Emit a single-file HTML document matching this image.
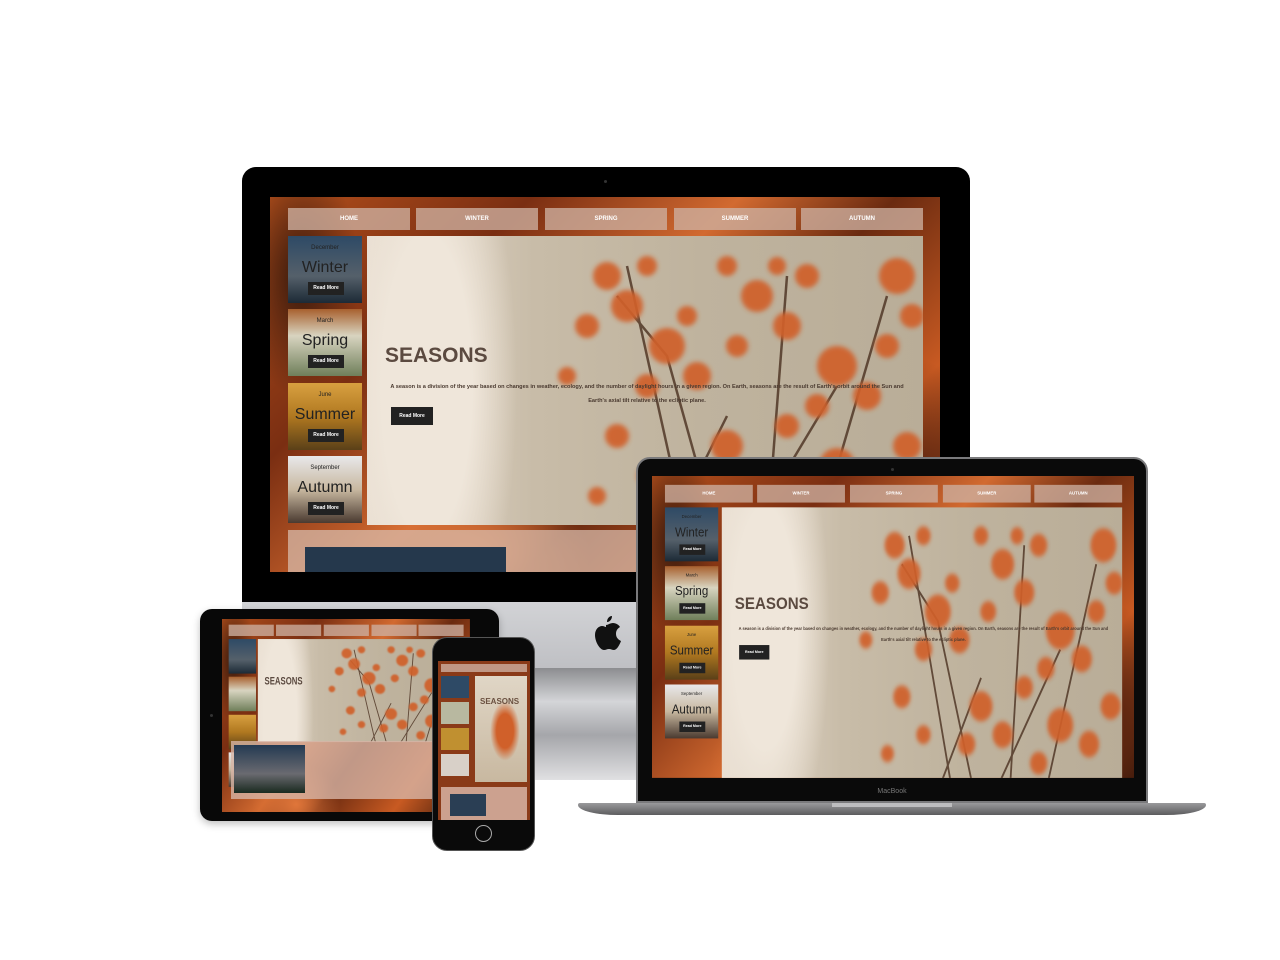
<!DOCTYPE html>
<html><head><meta charset="utf-8">
<style>
*{margin:0;padding:0;box-sizing:border-box}
body{width:1280px;height:960px;background:#fff;position:relative;overflow:hidden;font-family:"Liberation Sans",sans-serif}
.a{position:absolute}
.site{position:absolute;left:0;top:0;width:670px;height:375px;transform-origin:0 0;overflow:hidden;
background:
radial-gradient(ellipse 60px 120px at 30px 80px,#3a1a0c,transparent),
radial-gradient(ellipse 80px 140px at 640px 300px,#5a2410,transparent),
radial-gradient(ellipse 120px 80px at 200px 360px,#e0763a,transparent),
linear-gradient(135deg,#b4501c 0%,#7a2e12 25%,#d26a30 45%,#6a2a10 60%,#c85a22 80%,#3a180a 100%)}
.nav{position:absolute;top:11px;height:22px;width:122px;background:rgba(205,175,160,.78);color:#fff;font-size:6px;text-align:center;line-height:22px;font-weight:bold}
.card{position:absolute;left:18px;width:74px;height:67px;text-align:center;color:#222}
.card .m{position:absolute;top:9px;width:100%;font-size:6px}
.card .t{position:absolute;top:23px;width:100%;font-size:16px}
.card .b{position:absolute;left:20px;top:46px;width:36px;height:13px;background:#222;color:#fff;font-size:5px;line-height:13px;font-weight:bold}
.hero{position:absolute;left:97px;top:39px;width:556px;height:289px;overflow:hidden;
background:
radial-gradient(ellipse 90px 300px at 60px 150px,#efe6da 50%,transparent),
linear-gradient(90deg,#e8ddd0 0%,#c8bca8 30%,#bfb39e 60%,#b9ad98 100%)}
.hero svg{position:absolute;left:0;top:0;width:556px;height:289px}
.hero .h{position:absolute;left:18px;top:108px;font-size:21px;font-weight:bold;color:#5b4a40}
.hero .p{position:absolute;left:20px;top:144px;width:520px;font-size:5.6px;font-weight:bold;color:#4a3a30;text-align:center;line-height:14px}
.hero .b{position:absolute;left:24px;top:171px;width:42px;height:18px;background:#222;color:#fff;font-size:5px;line-height:18px;text-align:center;font-weight:bold}
.bot{position:absolute;left:18px;top:333px;width:635px;height:60px;background:rgba(215,185,170,.75)}
</style></head><body>
<svg width="0" height="0" style="position:absolute">
<defs>
<filter id="bl"><feGaussianBlur stdDeviation="2.5"/></filter>
<g id="berries">
<g stroke="#4a3020" stroke-width="2.5" fill="none" opacity=".8">
<path d="M320 300 L260 30"/><path d="M350 300 L300 120 L250 60"/><path d="M400 300 L420 40"/><path d="M450 300 L520 60"/><path d="M380 300 L470 150"/><path d="M300 300 L360 180"/>
</g>
<g fill="#d0602a" filter="url(#bl)" opacity=".92">
<circle cx="240" cy="40" r="14"/><circle cx="260" cy="70" r="16"/><circle cx="220" cy="90" r="12"/><circle cx="280" cy="30" r="10"/>
<circle cx="300" cy="110" r="18"/><circle cx="330" cy="140" r="14"/><circle cx="280" cy="150" r="12"/><circle cx="320" cy="80" r="10"/>
<circle cx="390" cy="60" r="16"/><circle cx="420" cy="90" r="14"/><circle cx="440" cy="40" r="12"/><circle cx="410" cy="30" r="9"/>
<circle cx="470" cy="130" r="20"/><circle cx="500" cy="160" r="14"/><circle cx="450" cy="170" r="12"/><circle cx="520" cy="110" r="12"/>
<circle cx="530" cy="40" r="18"/><circle cx="545" cy="80" r="12"/>
<circle cx="360" cy="210" r="16"/><circle cx="390" cy="240" r="14"/><circle cx="340" cy="250" r="12"/>
<circle cx="470" cy="230" r="18"/><circle cx="510" cy="250" r="14"/><circle cx="540" cy="210" r="14"/><circle cx="440" cy="270" r="12"/>
<circle cx="250" cy="200" r="12"/><circle cx="280" cy="240" r="10"/><circle cx="200" cy="140" r="9"/><circle cx="230" cy="260" r="9"/>
<circle cx="360" cy="30" r="10"/><circle cx="370" cy="110" r="11"/><circle cx="420" cy="190" r="12"/>
</g>
</g>
</defs></svg>

<!-- iMac -->
<div class="a" style="left:242px;top:167px;width:728px;height:436px;background:#000;border-radius:14px 14px 0 0"></div>
<div class="a" style="left:604px;top:180px;width:3px;height:3px;background:#333;border-radius:50%"></div>
<div class="a" style="left:242px;top:602px;width:728px;height:66px;background:linear-gradient(#d2d3d6,#bfc0c4)"></div>
<div class="a" style="left:535px;top:668px;width:140px;height:112px;background:linear-gradient(#8c8d90,#d4d5d8 30%,#a5a6aa 60%,#e0e0e2)"></div>
<svg class="a" style="left:590px;top:614px" width="32" height="38" viewBox="0 0 32 38"><path d="M22 2c0 3-2 6-5 6 0-3 2-6 5-6zM16 11c2 0 4-2 7-2 3 0 6 2 7 4-3 2-4 4-4 7 0 4 3 6 5 7-1 3-4 9-7 9-2 0-3-1-5-1s-3 1-5 1c-4 0-9-8-9-15 0-6 4-9 7-9 2 0 3 1 4 1z" fill="#111"/></svg>
<div class="a" style="left:270px;top:197px;width:670px;height:375px;overflow:hidden">
<div class="site">
<div class="nav" style="left:18px">HOME</div><div class="nav" style="left:146px">WINTER</div><div class="nav" style="left:275px">SPRING</div><div class="nav" style="left:404px">SUMMER</div><div class="nav" style="left:531px">AUTUMN</div>
<div class="card" style="top:39px;background:linear-gradient(#2e4a66,#55606a 60%,#1c2a36)"><div class="m">December</div><div class="t">Winter</div><div class="b">Read More</div></div>
<div class="card" style="top:112px;background:linear-gradient(#a8602e,#d8d4c0 40%,#6f7f5a)"><div class="m">March</div><div class="t">Spring</div><div class="b">Read More</div></div>
<div class="card" style="top:186px;background:linear-gradient(#d8a040,#b07820 50%,#5a4018)"><div class="m">June</div><div class="t">Summer</div><div class="b">Read More</div></div>
<div class="card" style="top:259px;background:linear-gradient(#e8e8ea,#c8b8a0 50%,#4a3a30)"><div class="m">September</div><div class="t">Autumn</div><div class="b">Read More</div></div>
<div class="hero"><svg viewBox="0 0 556 289"><use href="#berries"/></svg><div class="h">SEASONS</div><div class="p">A season is a division of the year based on changes in weather, ecology, and the number of daylight hours in a given region. On Earth, seasons are the result of Earth's orbit around the Sun and Earth's axial tilt relative to the ecliptic plane.</div><div class="b">Read More</div></div>
<div class="bot"><div class="a" style="left:17px;top:17px;width:201px;height:40px;background:#25384c"></div></div>
</div></div>

<!-- Laptop -->
<div class="a" style="left:636px;top:457px;width:512px;height:346px;background:#0a0a0a;border:2px solid #7a7a7c;border-radius:14px 14px 0 0"></div>
<div class="a" style="left:891px;top:468px;width:3px;height:3px;background:#333;border-radius:50%"></div>
<div class="a" style="left:652px;top:476px;width:482px;height:302px;overflow:hidden">
<div class="site" style="transform:scale(0.72,0.805)">
<div class="nav" style="left:18px">HOME</div><div class="nav" style="left:146px">WINTER</div><div class="nav" style="left:275px">SPRING</div><div class="nav" style="left:404px">SUMMER</div><div class="nav" style="left:531px">AUTUMN</div>
<div class="card" style="top:39px;background:linear-gradient(#2e4a66,#55606a 60%,#1c2a36)"><div class="m">December</div><div class="t">Winter</div><div class="b">Read More</div></div>
<div class="card" style="top:112px;background:linear-gradient(#a8602e,#d8d4c0 40%,#6f7f5a)"><div class="m">March</div><div class="t">Spring</div><div class="b">Read More</div></div>
<div class="card" style="top:186px;background:linear-gradient(#d8a040,#b07820 50%,#5a4018)"><div class="m">June</div><div class="t">Summer</div><div class="b">Read More</div></div>
<div class="card" style="top:259px;background:linear-gradient(#e8e8ea,#c8b8a0 50%,#4a3a30)"><div class="m">September</div><div class="t">Autumn</div><div class="b">Read More</div></div>
<div class="hero" style="height:340px"><svg viewBox="0 0 556 289" preserveAspectRatio="none" style="height:340px"><use href="#berries"/></svg><div class="h">SEASONS</div><div class="p">A season is a division of the year based on changes in weather, ecology, and the number of daylight hours in a given region. On Earth, seasons are the result of Earth's orbit around the Sun and Earth's axial tilt relative to the ecliptic plane.</div><div class="b">Read More</div></div>
</div></div>
<div class="a" style="left:640px;top:788px;width:504px;text-align:center;color:#777;font-size:7px">MacBook</div>
<div class="a" style="left:578px;top:803px;width:628px;height:12px;background:linear-gradient(#9a9a9c,#5c5c5e);border-radius:2px 2px 40px 40px/2px 2px 10px 10px"></div>
<div class="a" style="left:832px;top:803px;width:120px;height:4px;background:#bdbdbf"></div>

<!-- Tablet -->
<div class="a" style="left:200px;top:609px;width:299px;height:212px;background:#080808;border-radius:12px;box-shadow:0 3px 8px rgba(0,0,0,.25)"></div>
<div class="a" style="left:210px;top:714px;width:3px;height:3px;background:#333;border-radius:50%"></div>
<div class="a" style="left:222px;top:619px;width:248px;height:193px;overflow:hidden">
<div class="site" style="transform:scale(0.37,0.515)">
<div class="nav" style="left:18px"></div><div class="nav" style="left:146px"></div><div class="nav" style="left:275px"></div><div class="nav" style="left:404px"></div><div class="nav" style="left:531px"></div>
<div class="card" style="top:39px;background:linear-gradient(#2e4a66,#55606a 60%,#1c2a36)"></div>
<div class="card" style="top:112px;background:linear-gradient(#a8602e,#d8d4c0 40%,#6f7f5a)"></div>
<div class="card" style="top:186px;background:linear-gradient(#d8a040,#b07820 50%,#5a4018)"></div>
<div class="card" style="top:259px;background:linear-gradient(#e8e8ea,#c8b8a0 50%,#4a3a30)"></div>
<div class="hero" style="height:200px"><svg viewBox="0 0 556 289" preserveAspectRatio="none" style="height:200px"><use href="#berries"/></svg><div class="h" style="top:70px">SEASONS</div></div>
</div>
<div class="a" style="left:9px;top:122px;width:238px;height:58px;background:rgba(215,180,165,.8)"></div>
<div class="a" style="left:12px;top:126px;width:71px;height:48px;background:linear-gradient(#243a52,#6a6a70 60%,#1a2a20)"></div>
</div>

<!-- Phone -->
<div class="a" style="left:432px;top:637px;width:103px;height:214px;background:#0a0a0a;border:1px solid #555;border-radius:15px"></div>
<div class="a" style="left:438px;top:661px;width:92px;height:159px;overflow:hidden;background:#8a3a18">
<div class="a" style="left:3px;top:3px;width:86px;height:8px;background:rgba(205,175,160,.8)"></div>
<div class="a" style="left:3px;top:15px;width:28px;height:22px;background:#2e4a66"></div>
<div class="a" style="left:3px;top:41px;width:28px;height:22px;background:#b8b8a0"></div>
<div class="a" style="left:3px;top:67px;width:28px;height:22px;background:#c09030"></div>
<div class="a" style="left:3px;top:93px;width:28px;height:22px;background:#d8d0c8"></div>
<div class="a" style="left:37px;top:15px;width:52px;height:106px;background:linear-gradient(#e0d6c6,#c8b8a0);"></div>
<div class="a" style="left:52px;top:40px;width:30px;height:60px;background:radial-gradient(#d0602a 40%,transparent 70%)"></div>
<div class="a" style="left:42px;top:36px;font-size:8px;font-weight:bold;color:#6a5040">SEASONS</div>
<div class="a" style="left:3px;top:126px;width:86px;height:33px;background:rgba(215,180,165,.85)"></div>
<div class="a" style="left:12px;top:133px;width:36px;height:22px;background:#2a3e54"></div>
</div>
<div class="a" style="left:475px;top:825px;width:17px;height:17px;border:1.5px solid #aaa;border-radius:50%"></div>
</body></html>
